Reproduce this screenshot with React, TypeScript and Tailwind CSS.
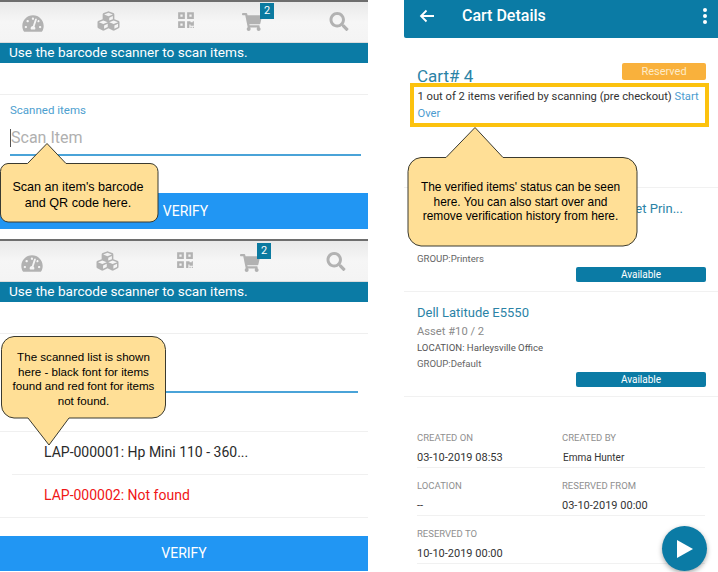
import { FaTachometerAlt, FaCubes, FaQrcode, FaShoppingCart, FaSearch } from "react-icons/fa";

function Toolbar({ second }: { second: boolean }) {
  return (
    <div className={`h-[40px] flex items-start bg-gradient-to-b from-[#e9e9e9] via-[#f6f6f6] to-[#f4f4f4] text-[#b2b2b2] ${second ? "pl-[21px]" : "pl-[22px]"}`}>
      <FaTachometerAlt className={`w-[22px] h-[19px] shrink-0 ${second ? "mt-[13px]" : "mt-[12px]"}`} />
      <FaCubes className={`w-[27px] h-[22px] ml-[51px] shrink-0 ${second ? "mt-[9px]" : "mt-[8px]"}`} />
      <FaQrcode className={`w-[18px] h-[18px] ml-[55px] shrink-0 ${second ? "mt-[10px]" : "mt-[9px]"}`} />
      <div className={`relative shrink-0 ${second ? "ml-[46px] mt-[13px]" : "ml-[47px] mt-[11px]"}`}>
        <FaShoppingCart className="w-[20px] h-[18px]" />
        <span className={`absolute w-[14px] h-[16px] bg-[#0b7aa0] text-white text-[11px] leading-[16px] text-center ${second ? "left-[17px] top-[-11px]" : "left-[18px] top-[-10px]"}`}>2</span>
      </div>
      <FaSearch className={`w-[20px] h-[19px] shrink-0 ${second ? "ml-[66px] mt-[11px]" : "ml-[67px] mt-[10px]"}`} />
    </div>
  );
}

function Banner() {
  return (
    <div className="h-[20px] bg-[#0b7ba5] text-white text-[13.6px] leading-[19px] pl-[9px]">
      Use the barcode scanner to scan items.
    </div>
  );
}

function Callout({
  className,
  w,
  h,
  path,
  textClass,
  lines,
}: {
  className: string;
  w: number;
  h: number;
  path: string;
  textClass: string;
  lines: string[];
}) {
  return (
    <div className={`absolute ${className}`}>
      <svg width={w} height={h} viewBox={`0 0 ${w} ${h}`} className="block">
        <path d={path} fill="#ffdf96" stroke="#3a3a30" strokeWidth="1" strokeLinejoin="round" />
      </svg>
      <div className={`absolute text-center text-black font-['Liberation_Sans',Arial,sans-serif] ${textClass}`}>
        {lines.map((l) => (
          <div key={l}>{l}</div>
        ))}
      </div>
    </div>
  );
}

function Available() {
  return (
    <div className="ml-auto w-[130px] h-[15px] rounded-[2px] bg-[#0b7ba5] text-white text-[10px] leading-[15px] text-center">
      Available
    </div>
  );
}

function Field({ label, value, valueClass }: { label: string; value: string; valueClass: string }) {
  return (
    <div className="h-[47px] pt-[11px]">
      <div className="text-[9.5px] leading-[14px] text-[#8f8f8f]">{label}</div>
      <div className={`mt-[6px] leading-[14px] text-[#333] ${valueClass}`}>{value}</div>
    </div>
  );
}

export default function App() {
  return (
    <div className="relative w-[718px] h-[572px] overflow-hidden bg-white flex font-['Roboto',sans-serif]">
      {/* Left column */}
      <div className="w-[368px] shrink-0">
        {/* Panel one */}
        <div className="h-[239px] border-t-2 border-[#6e6e6e]">
          <Toolbar second={false} />
          <div className="h-[1px] bg-[#dcdcdc]" />
          <Banner />
          <div className="h-[32px] border-b border-[#efefef]" />
          <div className="pl-[10px] pr-[7px] pt-[8px]">
            <div className="text-[11.5px] leading-[14px] text-[#4da0cf]">Scanned items</div>
            <div className="mt-[9px] h-[30px] border-b-2 border-[#4aa3d8] flex items-start">
              <span className="w-[1px] h-[18px] mt-[3px] bg-[#555]" />
              <span className="mt-[1px] text-[16px] leading-[22px] text-[#b0b0b0]">Scan Item</span>
            </div>
          </div>
          <div className="mt-[37px] h-[36px] bg-[#2196f3] flex items-center justify-center pl-[3px] text-white text-[14px]">
            VERIFY
          </div>
        </div>
        {/* Panel two */}
        <div className="h-[333px] border-t-2 border-[#6e6e6e]">
          <Toolbar second />
          <div className="h-[1px] bg-[#dcdcdc]" />
          <Banner />
          <div className="h-[32px] border-b border-[#efefef]" />
          <div className="h-[59px] border-b-2 border-[#4aa3d8] ml-[10px] mr-[10px]" />
          <div className="h-[39px] border-b border-[#f0f0f0]" />
          <div className="h-[43px] border-b border-[#f0f0f0] ml-[12px] pl-[32px] text-[14px] leading-[41px] text-[#2a2a2a]">
            LAP-000001: Hp Mini 110 - 360...
          </div>
          <div className="h-[43px] border-b border-[#f0f0f0] pl-[44px] text-[14px] leading-[41px] text-[#f01616]">
            LAP-000002: Not found
          </div>
          <div className="mt-[18px] h-[35px] bg-[#2196f3] flex items-center justify-center text-white text-[14px]">
            VERIFY
          </div>
        </div>
      </div>

      {/* Right column */}
      <div className="ml-[36px] flex-1 min-w-0">
        <div className="h-[38px] bg-[#0b7ba5] rounded-bl-[2px] flex items-center pl-[15px] pr-[11px] pb-[6px] text-white">
          <svg width="16" height="14" viewBox="0 0 16 14" fill="none" stroke="currentColor" strokeWidth="1.8">
            <path d="M15 7H2M7.5 1.5L2 7l5.5 5.5" />
          </svg>
          <span className="ml-[27px] text-[16px] font-medium">Cart Details</span>
          <span className="ml-auto flex flex-col gap-[2px]">
            <span className="w-[4px] h-[4px] bg-white rounded-full" />
            <span className="w-[4px] h-[4px] bg-white rounded-full" />
            <span className="w-[4px] h-[4px] bg-white rounded-full" />
          </span>
        </div>

        <div className="h-[150px] border-b border-[#f1f1f1] pl-[13px] pr-[12px] pt-[25px]">
          <div className="flex justify-between items-start">
            <span className="mt-[1px] text-[17px] leading-[24px] text-[#2b83a6]">Cart# 4</span>
            <span className="w-[84px] h-[17px] bg-[#f9b13c] rounded-[2px] text-[#fdebc8] text-[11px] leading-[17px] text-center">
              Reserved
            </span>
          </div>
          <div className="mt-[-5px] -ml-[7px] pt-[1px] text-[11.2px] leading-[17px] text-[#333] pl-[3.5px] border-[4px] border-[#fcc20e] w-[299px] h-[44px]">
            1 out of 2 items verified by scanning (pre checkout) <span className="text-[#4d9cd0]">Start Over</span>
          </div>
        </div>

        <div className="h-[104px] border-b border-[#f1f1f1] pl-[13px] pr-[12px] pt-[12px]">
          <div className="text-[13px] leading-[18px] text-[#2b83a6] whitespace-nowrap">HP Photosmart Wireless Colour A Inkjet Prin...</div>
          <div className="mt-[34px] text-[9.6px] leading-[14px] text-[#666]">GROUP:Printers</div>
          <div className="mt-[1px]"><Available /></div>
        </div>

        <div className="h-[105px] border-b border-[#f1f1f1] pl-[13px] pr-[12px] pt-[12px]">
          <div className="text-[13px] leading-[18px] text-[#2b83a6]">Dell Latitude E5550</div>
          <div className="mt-[2px] text-[11.2px] leading-[16px] text-[#8a8a8a]">Asset #10 / 2</div>
          <div className="text-[9.6px] leading-[16px] text-[#555]">LOCATION: Harleysville Office</div>
          <div className="text-[9.6px] leading-[16px] text-[#666]">GROUP:Default</div>
          <Available />
        </div>

        <div className="mt-[23px] pl-[13px] pr-[13px]">
          <div className="grid grid-cols-[145px_1fr] border-b border-[#f1f1f1]">
            <Field label="CREATED ON" value="03-10-2019 08:53" valueClass="text-[11px]" />
            <Field label="CREATED BY" value="Emma Hunter" valueClass="pl-[1px] text-[10px]" />
          </div>
          <div className="grid grid-cols-[145px_1fr] border-b border-[#f1f1f1]">
            <Field label="LOCATION" value="--" valueClass="text-[11px]" />
            <Field label="RESERVED FROM" value="03-10-2019 00:00" valueClass="text-[11px]" />
          </div>
          <div className="grid grid-cols-[145px_1fr] border-b border-[#f1f1f1]">
            <Field label="RESERVED TO" value="10-10-2019 00:00" valueClass="text-[11px]" />
            <div />
          </div>
        </div>
      </div>

      {/* Floating action button */}
      <div className="absolute left-[662px] top-[526px] w-[45px] h-[45px] rounded-full bg-[#0b7ba5] shadow-[0_2px_5px_rgba(0,0,0,0.35)] flex items-center justify-center">
        <svg width="18" height="20" viewBox="0 0 18 20">
          <path d="M1 1l16 9L1 19z" fill="#fff" />
        </svg>
      </div>

      {/* Callouts */}
      <Callout
        className="left-0 top-[142px]"
        w={160}
        h={82}
        path="M8 21.5H27.5L47 1.5L66 21.5H150A8 8 0 0 1 158 29.5V72A8 8 0 0 1 150 80H8A8 8 0 0 1 .5 72V29.5A8 8 0 0 1 8 21.5Z"
        textClass="left-0 w-[156px] top-[37px] leading-[16px] text-[12.6px]"
        lines={["Scan an item's barcode", "and QR code here."]}
      />
      <Callout
        className="left-0 top-[335px]"
        w={168}
        h={112}
        path="M14 1.5H152A13 13 0 0 1 165.5 14.5V70A13 13 0 0 1 152 83H69L49 110L28 83H14A13 13 0 0 1 1.5 70V14.5A13 13 0 0 1 14 1.5Z"
        textClass="left-0 w-[167px] top-[15px] leading-[14.5px] text-[11.6px]"
        lines={["The scanned list is shown", "here - black font for items", "found and red font for items", "not found."]}
      />
      <Callout
        className="left-[407px] top-[126px]"
        w={232}
        h={122}
        path="M14 31.5H39L68 1.5L96 31.5H216A14 14 0 0 1 230 45.5V106A14 14 0 0 1 216 120H14A14 14 0 0 1 1 106V45.5A14 14 0 0 1 14 31.5Z"
        textClass="left-0 w-[227px] top-[54px] leading-[14.5px] text-[11.9px]"
        lines={["The verified items' status can be seen", "here. You can also start over and", "remove verification history from here."]}
      />
    </div>
  );
}
